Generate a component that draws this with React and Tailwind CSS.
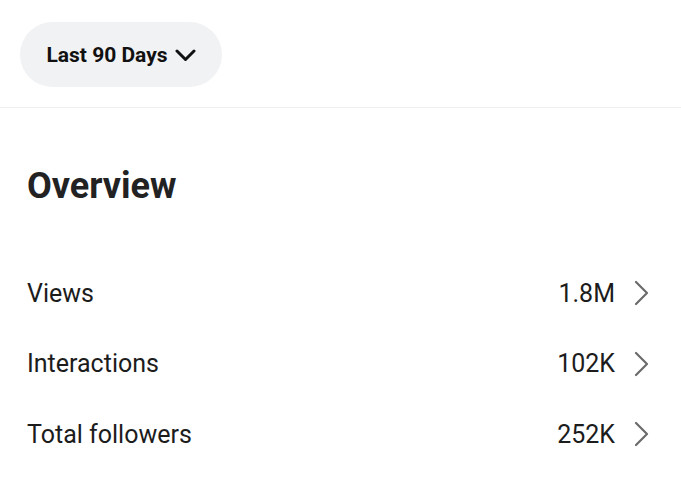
const rows = [
  { label: 'Views', value: '1.8M' },
  { label: 'Interactions', value: '102K' },
  { label: 'Total followers', value: '252K' },
]

export default function App() {
  return (
    <div className="w-[681px] h-[499px] bg-white overflow-hidden" style={{ fontFamily: 'Roboto, "Liberation Sans", sans-serif' }}>
      {/* Date range filter */}
      <div className="px-5 pt-[22px] pb-5 border-b border-[#eeeeee]">
        <button className="h-[65px] w-[202px] pt-[3px] rounded-full bg-[#f1f2f4] flex items-center justify-center gap-[7px] text-[21px] font-bold text-[#111]">
          <span>Last 90 Days</span>
          <svg width="21" height="13" viewBox="0 0 21 13" fill="none" stroke="currentColor" strokeWidth="3" strokeLinecap="round" strokeLinejoin="round" className="-mt-[2px]">
            <polyline points="2,2 10.5,10.5 19,2" />
          </svg>
        </button>
      </div>

      {/* Overview */}
      <div className="px-[27px]">
        <h2 className="mt-[58px] text-[36px] leading-[40px] font-bold text-[#222]">Overview</h2>
        <div className="mt-[52px]">
          {rows.map((row) => (
            <div key={row.label} className="h-[70.5px] flex items-center justify-between text-[25px] text-[#1c1c1c]">
              <span>{row.label}</span>
              <div className="flex items-center gap-[19px]">
                <span>{row.value}</span>
                <svg width="16" height="26" viewBox="0 0 16 26" fill="none" stroke="#6b6b6b" strokeWidth="2.2" strokeLinecap="round" strokeLinejoin="round" className="mr-[4px]">
                  <polyline points="2,2 13,13 2,24" />
                </svg>
              </div>
            </div>
          ))}
        </div>
      </div>
    </div>
  )
}
